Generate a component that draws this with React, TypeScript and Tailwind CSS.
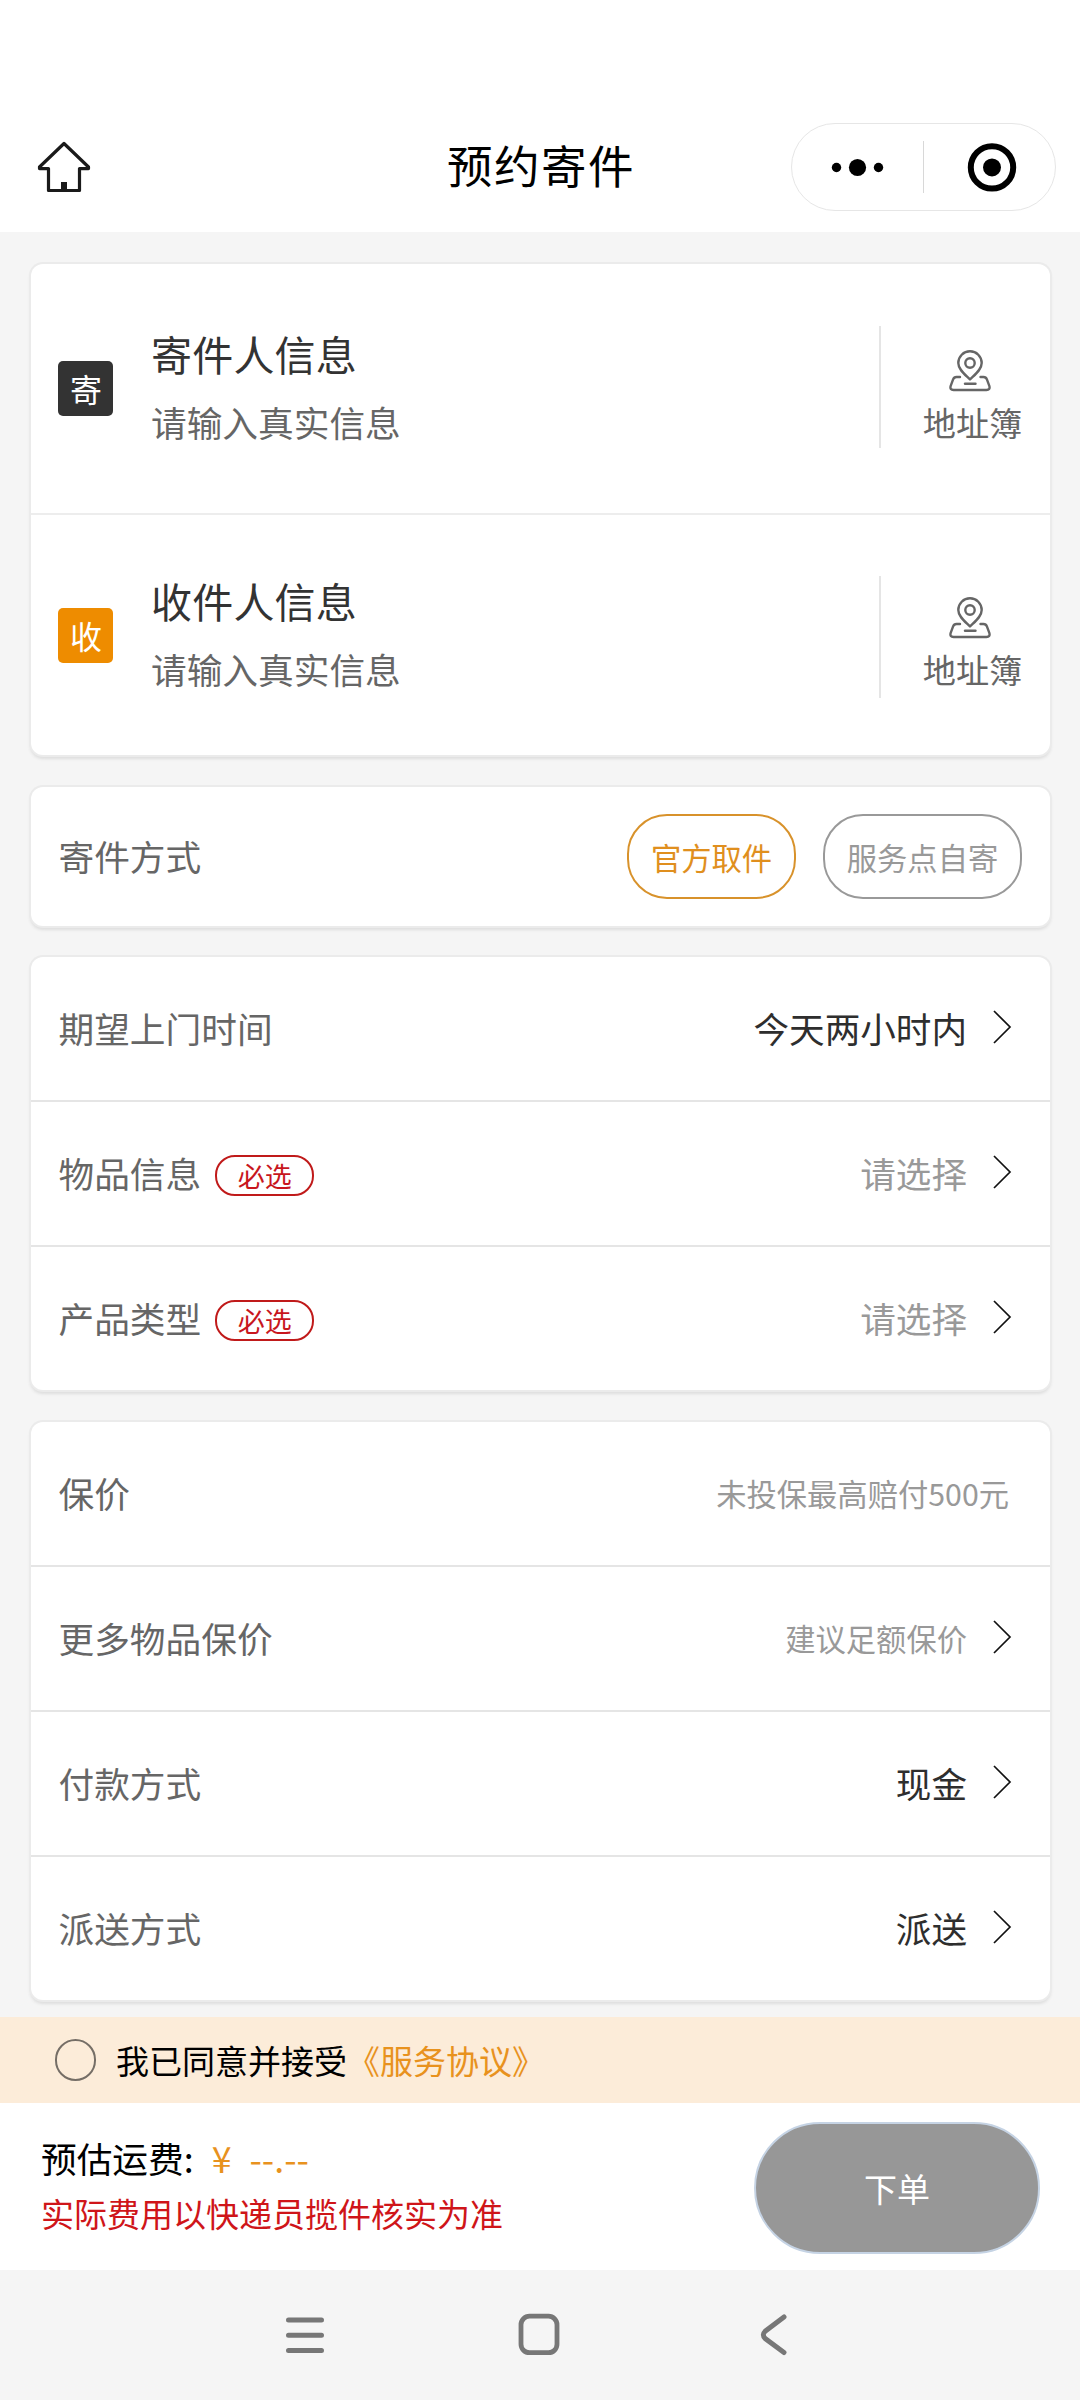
import type { ReactNode } from "react";

function Chevron() {
  return (
    <svg className="ml-[25px] mr-[38px] mb-[2px] h-[34px] w-[20px]" viewBox="0 0 20 34" fill="none" stroke="#111" strokeWidth="1.7">
      <path d="M2 1 18 17 2 33" />
    </svg>
  );
}

function PinIcon() {
  return (
    <svg className="h-[42px] w-[42px]" viewBox="0 0 42 42" fill="none" stroke="#666" strokeWidth="2.4" strokeLinecap="round" strokeLinejoin="round">
      <path d="M21 29.500C16 24.500 9.300 19.500 9.300 13a11.700 11.700 0 0 1 23.400 0C32.700 19.500 26 24.500 21 29.500Z" />
      <circle cx="21" cy="13" r="4.700" />
      <path d="M11 27H7.500Q5 27 4.100 29.400L1.600 36.200Q.7 40 4.500 40H37.500Q41.300 40 40.400 36.200L37.900 29.400Q37 27 34.500 27H31.500" />
      <path d="M16 33.800H26.500" />
    </svg>
  );
}

function Card({ className = "", children }: { className?: string; children: ReactNode }) {
  return (
    <section className={`ml-[31px] w-[1019px] rounded-[12px] bg-white shadow-[0_0_0_2px_#ebebeb,0_3px_3px_1px_#dedede] ${className}`}>
      {children}
    </section>
  );
}

function Contact({ mark, tone, title, className = "", ruleClass = "" }: { mark: string; tone: string; title: string; className?: string; ruleClass?: string }) {
  return (
    <div className={`flex items-start ${className}`}>
      <div className={`ml-[27px] mt-[35px] flex h-[55px] w-[55px] items-center justify-center rounded-[5px] pl-[1px] text-[32px] leading-none text-white ${tone}`}>
        <span className="mt-[-1px]">{mark}</span>
      </div>
      <div className="ml-[38px] flex-1">
        <div className="mt-[-3px] text-[41px] leading-[60px] tracking-[0.200px] text-[#333]">{title}</div>
        <div className="mt-[14px] text-[35.700px] leading-[50px] text-[#666]">请输入真实信息</div>
      </div>
      <div className={`h-[122px] w-[2px] bg-[#e5e5e5] ${ruleClass}`} />
      <div className="flex w-[169px] flex-col items-center pl-[14px] pt-[24px]">
        <div className="mr-[5px] h-[42px]"><PinIcon /></div>
        <div className="mt-[6px] text-[33.200px] leading-[48px] text-[#666]">地址簿</div>
      </div>
    </div>
  );
}

function Row({ label, required, last, children }: { label: string; required?: boolean; last?: boolean; children: ReactNode }) {
  return (
    <div className={`flex items-center pb-[2px] pl-[27.500px] ${last ? "h-[143px]" : "h-[145px] border-b-2 border-[#e5e5e5]"}`}>
      <span className="text-[35.700px] leading-[50px] text-[#666]">{label}</span>
      {required && (
        <span className="ml-[14px] mt-[6px] flex h-[41px] w-[99px] items-center justify-center rounded-[20px] border-2 border-[#c01a1a] text-[27px] leading-none text-[#c8161d]">
          必选
        </span>
      )}
      <div className="ml-auto flex items-center">{children}</div>
    </div>
  );
}

function Value({ children }: { children: string }) {
  return <span className="text-[35.600px] leading-[50px] text-[#2e2e2e]">{children}</span>;
}

function Placeholder({ children }: { children: string }) {
  return <span className="text-[35.600px] leading-[50px] text-[#999]">{children}</span>;
}

export default function App() {
  return (
    <div className="flex h-[2400px] w-[1080px] flex-col overflow-hidden bg-[#f5f5f5] font-['Noto_Sans_CJK_SC',sans-serif]">
      <header className="flex h-[232px] shrink-0 items-start bg-white">
        <svg className="ml-[37px] mt-[141px] h-[52px] w-[54px]" viewBox="0 0 54 52" fill="none" stroke="#1a1a1a" strokeWidth="3.200" strokeLinejoin="round">
          <path d="M27 2.500 2.500 26V27.600H11.500V49.500H42.500V27.600H51.500V26Z" />
          <path d="M27 41V49" strokeWidth="6" />
        </svg>
        <h1 className="ml-[356px] mt-[131px] w-[190px] whitespace-nowrap text-[45.500px] leading-[66px] tracking-[1.500px] text-black">预约寄件</h1>
        <div className="ml-[154px] mt-[123px] flex h-[88px] w-[265px] items-center rounded-full border border-[#e6e6e6]">
          <svg className="ml-[38px] h-[20px] w-[54px]" viewBox="0 0 54 20" fill="#000">
            <circle cx="6.500" cy="10.500" r="4.700" />
            <circle cx="27.500" cy="10.500" r="8.600" />
            <circle cx="48.500" cy="10.500" r="4.700" />
          </svg>
          <div className="ml-[39px] h-[52px] w-px bg-[#d8d8d8]" />
          <svg className="ml-[43px] h-[50px] w-[50px]" viewBox="0 0 50 50">
            <circle cx="25" cy="25.400" r="21.200" fill="none" stroke="#000" strokeWidth="6" />
            <circle cx="25" cy="25.400" r="9" fill="#000" />
          </svg>
        </div>
      </header>

      <main className="flex h-[1785px] shrink-0 flex-col">
        <Card className="mt-[32px] h-[491px]">
          <Contact mark="寄" tone="bg-[#333]" title="寄件人信息" className="h-[251px] border-b-2 border-[#ededed] pt-[62px]" />
          <Contact mark="收" tone="bg-[#ee8c00]" title="收件人信息" className="pt-[58px]" ruleClass="mt-[3px]" />
        </Card>

        <Card className="mt-[32px] flex h-[139px] items-center pl-[27.500px]">
          <span className="mb-[2px] text-[35.700px] leading-[50px] text-[#666]">寄件方式</span>
          <div className="ml-auto mr-[28px] flex gap-[27px]">
            <button className="flex h-[85px] w-[169px] items-center justify-center rounded-[40px] border-2 border-[#d8922b] pt-[3px] text-[30.300px] text-[#e08f1e]">
              官方取件
            </button>
            <button className="flex h-[85px] w-[199px] items-center justify-center rounded-[40px] border-2 border-[#999] pt-[3px] text-[30.300px] text-[#999]">
              服务点自寄
            </button>
          </div>
        </Card>

        <Card className="mt-[31px]">
          <Row label="期望上门时间"><Value>今天两小时内</Value><Chevron /></Row>
          <Row label="物品信息" required><Placeholder>请选择</Placeholder><Chevron /></Row>
          <Row label="产品类型" required last><Placeholder>请选择</Placeholder><Chevron /></Row>
        </Card>

        <Card className="mt-[32px]">
          <Row label="保价"><span className="mr-[41px] mt-[2px] text-[30.300px] text-[#999]">未投保最高赔付500元</span></Row>
          <Row label="更多物品保价"><span className="mt-[2px] text-[30.300px] text-[#999]">建议足额保价</span><Chevron /></Row>
          <Row label="付款方式"><Value>现金</Value><Chevron /></Row>
          <Row label="派送方式" last><Value>派送</Value><Chevron /></Row>
        </Card>
      </main>

      <div className="flex h-[86px] shrink-0 items-center bg-[#fcecd9] text-[33px] leading-[48px] text-black">
        <span className="ml-[55px] h-[42px] w-[41px] rounded-full border-2 border-[#756e66]" />
        <span className="ml-[20px]">我已同意并接受</span>
        <span className="text-[#e8921e]">《服务协议》</span>
      </div>

      <footer className="flex h-[167px] shrink-0 bg-white">
        <div className="ml-[41px] mt-[30px]">
          <div className="flex text-[35.700px] leading-[50px] text-black">
            <span>预估运费:</span>
            <span className="ml-[18px] text-[#e8921e]">¥</span>
            <span className="ml-[18px] text-[#e8921e]">--.--</span>
          </div>
          <div className="mt-[6px] text-[33px] leading-[48px] text-[#cf1519]">实际费用以快递员揽件核实为准</div>
        </div>
        <button className="ml-auto mr-[40px] mt-[19px] flex h-[132px] w-[286px] items-center justify-center rounded-full border-2 border-[#c5d3e4] bg-[#979797] pt-px text-[33px] text-white">
          下单
        </button>
      </footer>

      <nav className="flex h-[130px] shrink-0 bg-[#f5f5f5]">
        <svg className="ml-[284px] mt-[44px] h-[44px] w-[42px]" viewBox="0 0 42 44" stroke="#777" strokeWidth="5" strokeLinecap="round">
          <path d="M4.500 6H37.500M4.500 21.200H37.500M4.500 36.500H37.500" />
        </svg>
        <svg className="ml-[191px] mt-[43px] h-[44px] w-[44px]" viewBox="0 0 44 44" fill="none" stroke="#777" strokeWidth="4.800">
          <rect x="4" y="3.200" width="36" height="36.500" rx="8.500" />
        </svg>
        <svg className="ml-[198px] mt-[43px] h-[44px] w-[32px]" viewBox="0 0 32 44" fill="none" stroke="#777" strokeWidth="5" strokeLinecap="round">
          <path d="M25 4 6.200 18.200Q2.500 21.700 6.200 25.600L25 39.500" />
        </svg>
      </nav>
    </div>
  );
}
